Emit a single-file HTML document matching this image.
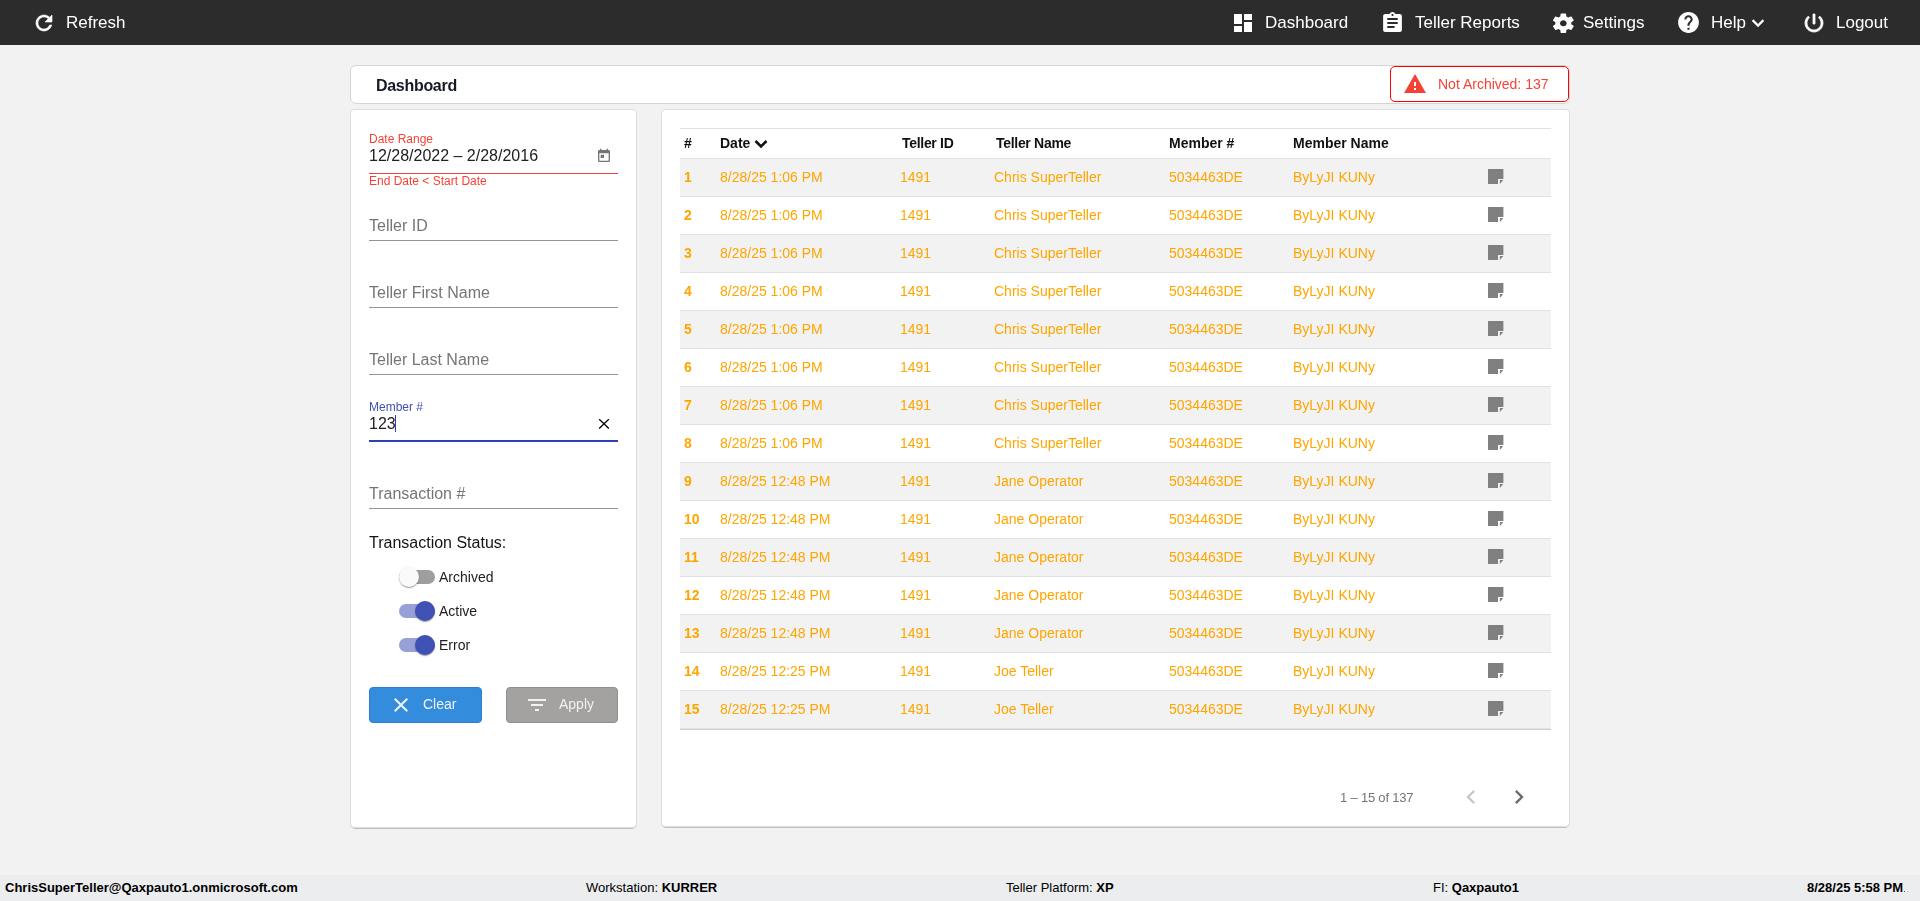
<!DOCTYPE html>
<html>
<head>
<meta charset="utf-8">
<style>
html,body{margin:0;padding:0;width:1920px;height:901px;overflow:hidden;background:#f2f2f2;font-family:"Liberation Sans",sans-serif;}
.a{position:absolute;}
.t{position:absolute;white-space:nowrap;line-height:1;}
svg{position:absolute;display:block;}
#nav{left:0;top:0;width:1920px;height:45px;background:#2c2c2c;}
.nt{font-size:17px;color:#fff;top:14px;}
.card{position:absolute;background:#fff;border-radius:4px;box-shadow:0 0 0 1px rgba(0,0,0,.085);}
.ph{font-size:16px;color:#757575;}
.ul{position:absolute;left:369px;width:249px;height:1px;background:#949494;}
.row{position:absolute;left:680px;width:871px;height:37px;border-bottom:1px solid #dee2e6;}
.odd{background:#f2f2f2;}
.c{position:absolute;white-space:nowrap;line-height:1;font-size:14px;color:#ffa500;}
.h{position:absolute;white-space:nowrap;line-height:1;font-size:14px;color:#111;font-weight:bold;top:136px;}
.ft{position:absolute;white-space:nowrap;line-height:1;font-size:13px;color:#000;top:881px;}
</style>
</head>
<body>
<div id="main" style="position:absolute;left:0;top:0;width:1920px;height:901px;will-change:transform">
<!-- NAV -->
<div id="nav" class="a">
  <svg style="left:32px;top:11px" width="24" height="24" viewBox="0 0 24 24"><path fill="#fff" stroke="#fff" stroke-width="0.6" d="M17.65 6.35C16.2 4.9 14.21 4 12 4c-4.42 0-7.99 3.58-7.99 8s3.57 8 7.99 8c3.73 0 6.84-2.55 7.73-6h-2.08c-.82 2.33-3.04 4-5.65 4-3.31 0-6-2.69-6-6s2.69-6 6-6c1.66 0 3.14.69 4.22 1.78L13 11h7V4l-2.35 2.35z"/></svg>
  <div class="t nt" style="left:66px">Refresh</div>

  <svg style="left:1231px;top:11px" width="24" height="24" viewBox="0 0 24 24"><path fill="#fff" d="M3 13h8V3H3v10zm0 8h8v-6H3v6zm10 0h8V11h-8v10zm0-18v6h8V3h-8z"/></svg>
  <div class="t nt" style="left:1265px">Dashboard</div>

  <svg style="left:1380.3px;top:11px" width="25" height="24" viewBox="0 0 24 24" preserveAspectRatio="none"><path fill="#fff" d="M19 3h-4.18C14.4 1.84 13.3 1 12 1c-1.3 0-2.4.84-2.82 2H5c-1.1 0-2 .9-2 2v14c0 1.1.9 2 2 2h14c1.1 0 2-.9 2-2V5c0-1.1-.9-2-2-2zm-7 0c.55 0 1 .45 1 1s-.45 1-1 1-1-.45-1-1 .45-1 1-1zm2 14H7v-2h7v2zm3-4H7v-2h10v2zm0-4H7V7h10v2z"/></svg>
  <div class="t nt" style="left:1415px">Teller Reports</div>

  <svg style="left:1550.2px;top:10.7px" width="26.7" height="24.5" viewBox="0 0 24 24" preserveAspectRatio="none"><path fill="#fff" d="M19.14 12.94c.04-.3.06-.61.06-.94 0-.32-.02-.64-.07-.94l2.03-1.58c.18-.14.23-.41.12-.61l-1.92-3.32c-.12-.22-.37-.29-.59-.22l-2.39.96c-.5-.38-1.03-.7-1.62-.94l-.36-2.54c-.04-.24-.24-.41-.48-.41h-3.84c-.24 0-.43.17-.47.41l-.36 2.54c-.59.24-1.13.57-1.62.94l-2.39-.96c-.22-.08-.47 0-.59.22L2.74 8.87c-.12.21-.08.47.12.61l2.03 1.58c-.05.3-.09.63-.09.94s.02.64.07.94l-2.03 1.58c-.18.14-.23.41-.12.61l1.92 3.32c.12.22.37.29.59.22l2.39-.96c.5.38 1.03.7 1.62.94l.36 2.54c.05.24.24.41.48.41h3.84c.24 0 .44-.17.47-.41l.36-2.54c.59-.24 1.13-.56 1.62-.94l2.39.96c.22.08.47 0 .59-.22l1.92-3.32c.12-.22.07-.47-.12-.61l-2.01-1.58zM12 15c-1.65 0-3-1.35-3-3s1.35-3 3-3 3 1.35 3 3-1.35 3-3 3z"/></svg>
  <div class="t nt" style="left:1583px">Settings</div>

  <svg style="left:1676.4px;top:10.4px" width="25" height="25" viewBox="0 0 24 24"><path fill="#fff" d="M12 2C6.48 2 2 6.48 2 12s4.48 10 10 10 10-4.48 10-10S17.52 2 12 2zm1 17h-2v-2h2v2zm2.07-7.75l-.9.92C13.45 12.9 13 13.5 13 15h-2v-.5c0-1.1.45-2.1 1.17-2.83l1.24-1.26c.37-.36.59-.86.59-1.41 0-1.1-.9-2-2-2s-2 .9-2 2H8c0-2.21 1.79-4 4-4s4 1.79 4 4c0 .88-.36 1.68-.93 2.25z"/></svg>
  <div class="t nt" style="left:1711px">Help</div>
  <svg style="left:1746px;top:11px" width="24" height="24" viewBox="0 0 24 24"><path fill="#fff" stroke="#fff" stroke-width="0.4" d="M16.59 8.59L12 13.17 7.41 8.59 6 10l6 6 6-6z"/></svg>

  <svg style="left:1802px;top:11px" width="24" height="24" viewBox="0 0 24 24"><path fill="#fff" stroke="#fff" stroke-width="0.8" d="M13 3h-2v10h2V3zm4.83 2.17l-1.42 1.42C17.99 7.86 19 9.81 19 12c0 3.87-3.13 7-7 7s-7-3.13-7-7c0-2.19 1.01-4.14 2.58-5.42L6.17 5.17C4.23 6.82 3 9.26 3 12c0 4.97 4.03 9 9 9s9-4.03 9-9c0-2.74-1.23-5.18-3.17-6.83z"/></svg>
  <div class="t nt" style="left:1836px">Logout</div>
</div>

<!-- HEADER CARD -->
<div class="a" style="left:350px;top:65px;width:1218px;height:37px;border:1px solid #d4d4d4;border-radius:6px;background:#fff"></div>
<div class="t" style="left:376px;top:78px;font-size:16px;font-weight:bold;color:#151a24;letter-spacing:-0.3px">Dashboard</div>
<div class="a" style="left:1390px;top:66px;width:177px;height:34px;border:1px solid #ff0000;border-radius:5px;background:#fff;"></div>
<svg style="left:1403px;top:72px" width="24" height="24" viewBox="0 0 24 24"><path fill="#f44336" d="M1 21h22L12 2 1 21zm12-3h-2v-2h2v2zm0-4h-2v-4h2v4z"/></svg>
<div class="t" style="left:1438px;top:77px;font-size:14px;color:#f44336">Not Archived: 137</div>

<!-- LEFT PANEL -->
<div class="a" style="left:350px;top:109px;width:287px;height:720px;border-radius:5px;background:linear-gradient(to bottom,rgba(0,0,0,.085) 719px,rgba(0,0,0,.2) 719px)"></div>
<div class="a" style="left:351px;top:110px;width:285px;height:717px;border-radius:4px;background:#fff"></div>
<div class="t" style="left:369px;top:133px;font-size:12px;color:#f44336">Date Range</div>
<div class="t" style="left:369px;top:148px;font-size:16px;color:#212121">12/28/2022 – 2/28/2016</div>
<svg style="left:596px;top:148px" width="16" height="16" viewBox="0 0 24 24"><path fill="#757575" d="M19 3h-1V1h-2v2H8V1H6v2H5c-1.11 0-1.99.9-1.99 2L3 19c0 1.1.89 2 2 2h14c1.1 0 2-.9 2-2V5c0-1.1-.9-2-2-2zm0 16H5V8h14v11zM7 10h5v5H7z"/></svg>
<div class="ul" style="top:173px;background:#f44336"></div>
<div class="t" style="left:369px;top:175px;font-size:12px;color:#f44336">End Date &lt; Start Date</div>

<div class="t ph" style="left:369px;top:218px">Teller ID</div>
<div class="ul" style="top:240px"></div>
<div class="t ph" style="left:369px;top:285px">Teller First Name</div>
<div class="ul" style="top:307px"></div>
<div class="t ph" style="left:369px;top:352px">Teller Last Name</div>
<div class="ul" style="top:374px"></div>

<div class="t" style="left:369px;top:401px;font-size:12px;color:#3f51b5">Member #</div>
<div class="t" style="left:369px;top:416px;font-size:16px;color:#212121">123</div>
<div class="a" style="left:395px;top:415px;width:1px;height:17px;background:#3040b0"></div>
<svg style="left:596px;top:416px" width="16" height="16" viewBox="0 0 16 16"><path d="M3.2 3.2L12.8 12.4M12.8 3.2L3.2 12.4" stroke="#000" stroke-width="1.35" fill="none"/></svg>
<div class="ul" style="top:440px;height:2px;background:#3040b0"></div>

<div class="t ph" style="left:369px;top:486px">Transaction #</div>
<div class="ul" style="top:508px"></div>

<div class="t" style="left:369px;top:535px;font-size:16px;color:#141414">Transaction Status:</div>

<!-- toggles -->
<div class="a" style="left:399px;top:570px;width:36px;height:14px;border-radius:7px;background:#9e9e9e"></div>
<div class="a" style="left:399px;top:567px;width:20px;height:20px;border-radius:50%;background:#fafafa;box-shadow:0 2px 1px -1px rgba(0,0,0,.2),0 1px 1px 0 rgba(0,0,0,.14),0 1px 3px 0 rgba(0,0,0,.12)"></div>
<div class="t" style="left:439px;top:570px;font-size:14px;color:#212121">Archived</div>

<div class="a" style="left:399px;top:604px;width:36px;height:14px;border-radius:7px;background:#97a1d7"></div>
<div class="a" style="left:415px;top:601px;width:20px;height:20px;border-radius:50%;background:#3f51b5;box-shadow:0 2px 1px -1px rgba(0,0,0,.2),0 1px 1px 0 rgba(0,0,0,.14),0 1px 3px 0 rgba(0,0,0,.12)"></div>
<div class="t" style="left:439px;top:604px;font-size:14px;color:#212121">Active</div>

<div class="a" style="left:399px;top:638px;width:36px;height:14px;border-radius:7px;background:#97a1d7"></div>
<div class="a" style="left:415px;top:635px;width:20px;height:20px;border-radius:50%;background:#3f51b5;box-shadow:0 2px 1px -1px rgba(0,0,0,.2),0 1px 1px 0 rgba(0,0,0,.14),0 1px 3px 0 rgba(0,0,0,.12)"></div>
<div class="t" style="left:439px;top:638px;font-size:14px;color:#212121">Error</div>

<!-- buttons -->
<div class="a" style="left:369px;top:687px;width:111px;height:34px;border:1px solid #2a7fcf;border-radius:4px;background:#338ddc"></div>
<svg style="left:389px;top:693px" width="24" height="24" viewBox="0 0 24 24"><path fill="#f2f2f2" d="M19 6.41L17.59 5 12 10.59 6.41 5 5 6.41 10.59 12 5 17.59 6.41 19 12 13.41 17.59 19 19 17.59 13.41 12z"/></svg>
<div class="t" style="left:423px;top:697px;font-size:14px;color:#f2f2f2">Clear</div>

<div class="a" style="left:506px;top:687px;width:110px;height:34px;border:1px solid #8f8f8f;border-radius:4px;background:#a3a2a0"></div>
<svg style="left:525px;top:693px" width="24" height="24" viewBox="0 0 24 24"><path fill="#f2f2f2" d="M10 18h4v-2h-4v2zM3 6v2h18V6H3zm3 7h12v-2H6v2z"/></svg>
<div class="t" style="left:559px;top:697px;font-size:14px;color:#f2f2f2">Apply</div>

<!-- RIGHT PANEL -->
<div class="a" style="left:661px;top:109px;width:909px;height:719px;border-radius:5px;background:linear-gradient(to bottom,rgba(0,0,0,.085) 718px,rgba(0,0,0,.2) 718px)"></div>
<div class="a" style="left:662px;top:110px;width:907px;height:716px;border-radius:4px;background:#fff"></div>
<div class="a" style="left:680px;top:128px;width:871px;height:1px;background:#dee2e6"></div>
<div class="a" style="left:680px;top:158px;width:871px;height:1px;background:#dee2e6"></div>
<div class="h" style="left:684px">#</div>
<div class="h" style="left:720px">Date</div>
<svg style="left:754px;top:139px" width="14" height="10" viewBox="0 0 14 10"><polyline points="1.5,2 7,7.5 12.5,2" fill="none" stroke="#111" stroke-width="2.6"/></svg>
<div class="h" style="left:902px;letter-spacing:-0.3px">Teller ID</div>
<div class="h" style="left:996px;letter-spacing:-0.3px">Teller Name</div>
<div class="h" style="left:1169px">Member #</div>
<div class="h" style="left:1293px">Member Name</div>

<div id="rows">
<div class="row odd" style="top:159px"><div class="c" style="left:4px;top:11px;font-weight:bold">1</div><div class="c" style="left:40px;top:11px">8/28/25 1:06 PM</div><div class="c" style="left:220px;top:11px">1491</div><div class="c" style="left:314px;top:11px">Chris SuperTeller</div><div class="c" style="left:489px;top:11px">5034463DE</div><div class="c" style="left:613px;top:11px">ByLyJI KUNy</div><svg style="left:808px;top:10px" width="16" height="16" viewBox="0 0 16 16"><path fill="#808080" d="M0 0H15.4V10H10V15H0Z"/><path fill="#808080" d="M11.9 11.1H15.3L11.9 15Z"/></svg></div>
<div class="row" style="top:197px"><div class="c" style="left:4px;top:11px;font-weight:bold">2</div><div class="c" style="left:40px;top:11px">8/28/25 1:06 PM</div><div class="c" style="left:220px;top:11px">1491</div><div class="c" style="left:314px;top:11px">Chris SuperTeller</div><div class="c" style="left:489px;top:11px">5034463DE</div><div class="c" style="left:613px;top:11px">ByLyJI KUNy</div><svg style="left:808px;top:10px" width="16" height="16" viewBox="0 0 16 16"><path fill="#808080" d="M0 0H15.4V10H10V15H0Z"/><path fill="#808080" d="M11.9 11.1H15.3L11.9 15Z"/></svg></div>
<div class="row odd" style="top:235px"><div class="c" style="left:4px;top:11px;font-weight:bold">3</div><div class="c" style="left:40px;top:11px">8/28/25 1:06 PM</div><div class="c" style="left:220px;top:11px">1491</div><div class="c" style="left:314px;top:11px">Chris SuperTeller</div><div class="c" style="left:489px;top:11px">5034463DE</div><div class="c" style="left:613px;top:11px">ByLyJI KUNy</div><svg style="left:808px;top:10px" width="16" height="16" viewBox="0 0 16 16"><path fill="#808080" d="M0 0H15.4V10H10V15H0Z"/><path fill="#808080" d="M11.9 11.1H15.3L11.9 15Z"/></svg></div>
<div class="row" style="top:273px"><div class="c" style="left:4px;top:11px;font-weight:bold">4</div><div class="c" style="left:40px;top:11px">8/28/25 1:06 PM</div><div class="c" style="left:220px;top:11px">1491</div><div class="c" style="left:314px;top:11px">Chris SuperTeller</div><div class="c" style="left:489px;top:11px">5034463DE</div><div class="c" style="left:613px;top:11px">ByLyJI KUNy</div><svg style="left:808px;top:10px" width="16" height="16" viewBox="0 0 16 16"><path fill="#808080" d="M0 0H15.4V10H10V15H0Z"/><path fill="#808080" d="M11.9 11.1H15.3L11.9 15Z"/></svg></div>
<div class="row odd" style="top:311px"><div class="c" style="left:4px;top:11px;font-weight:bold">5</div><div class="c" style="left:40px;top:11px">8/28/25 1:06 PM</div><div class="c" style="left:220px;top:11px">1491</div><div class="c" style="left:314px;top:11px">Chris SuperTeller</div><div class="c" style="left:489px;top:11px">5034463DE</div><div class="c" style="left:613px;top:11px">ByLyJI KUNy</div><svg style="left:808px;top:10px" width="16" height="16" viewBox="0 0 16 16"><path fill="#808080" d="M0 0H15.4V10H10V15H0Z"/><path fill="#808080" d="M11.9 11.1H15.3L11.9 15Z"/></svg></div>
<div class="row" style="top:349px"><div class="c" style="left:4px;top:11px;font-weight:bold">6</div><div class="c" style="left:40px;top:11px">8/28/25 1:06 PM</div><div class="c" style="left:220px;top:11px">1491</div><div class="c" style="left:314px;top:11px">Chris SuperTeller</div><div class="c" style="left:489px;top:11px">5034463DE</div><div class="c" style="left:613px;top:11px">ByLyJI KUNy</div><svg style="left:808px;top:10px" width="16" height="16" viewBox="0 0 16 16"><path fill="#808080" d="M0 0H15.4V10H10V15H0Z"/><path fill="#808080" d="M11.9 11.1H15.3L11.9 15Z"/></svg></div>
<div class="row odd" style="top:387px"><div class="c" style="left:4px;top:11px;font-weight:bold">7</div><div class="c" style="left:40px;top:11px">8/28/25 1:06 PM</div><div class="c" style="left:220px;top:11px">1491</div><div class="c" style="left:314px;top:11px">Chris SuperTeller</div><div class="c" style="left:489px;top:11px">5034463DE</div><div class="c" style="left:613px;top:11px">ByLyJI KUNy</div><svg style="left:808px;top:10px" width="16" height="16" viewBox="0 0 16 16"><path fill="#808080" d="M0 0H15.4V10H10V15H0Z"/><path fill="#808080" d="M11.9 11.1H15.3L11.9 15Z"/></svg></div>
<div class="row" style="top:425px"><div class="c" style="left:4px;top:11px;font-weight:bold">8</div><div class="c" style="left:40px;top:11px">8/28/25 1:06 PM</div><div class="c" style="left:220px;top:11px">1491</div><div class="c" style="left:314px;top:11px">Chris SuperTeller</div><div class="c" style="left:489px;top:11px">5034463DE</div><div class="c" style="left:613px;top:11px">ByLyJI KUNy</div><svg style="left:808px;top:10px" width="16" height="16" viewBox="0 0 16 16"><path fill="#808080" d="M0 0H15.4V10H10V15H0Z"/><path fill="#808080" d="M11.9 11.1H15.3L11.9 15Z"/></svg></div>
<div class="row odd" style="top:463px"><div class="c" style="left:4px;top:11px;font-weight:bold">9</div><div class="c" style="left:40px;top:11px">8/28/25 12:48 PM</div><div class="c" style="left:220px;top:11px">1491</div><div class="c" style="left:314px;top:11px">Jane Operator</div><div class="c" style="left:489px;top:11px">5034463DE</div><div class="c" style="left:613px;top:11px">ByLyJI KUNy</div><svg style="left:808px;top:10px" width="16" height="16" viewBox="0 0 16 16"><path fill="#808080" d="M0 0H15.4V10H10V15H0Z"/><path fill="#808080" d="M11.9 11.1H15.3L11.9 15Z"/></svg></div>
<div class="row" style="top:501px"><div class="c" style="left:4px;top:11px;font-weight:bold">10</div><div class="c" style="left:40px;top:11px">8/28/25 12:48 PM</div><div class="c" style="left:220px;top:11px">1491</div><div class="c" style="left:314px;top:11px">Jane Operator</div><div class="c" style="left:489px;top:11px">5034463DE</div><div class="c" style="left:613px;top:11px">ByLyJI KUNy</div><svg style="left:808px;top:10px" width="16" height="16" viewBox="0 0 16 16"><path fill="#808080" d="M0 0H15.4V10H10V15H0Z"/><path fill="#808080" d="M11.9 11.1H15.3L11.9 15Z"/></svg></div>
<div class="row odd" style="top:539px"><div class="c" style="left:4px;top:11px;font-weight:bold">11</div><div class="c" style="left:40px;top:11px">8/28/25 12:48 PM</div><div class="c" style="left:220px;top:11px">1491</div><div class="c" style="left:314px;top:11px">Jane Operator</div><div class="c" style="left:489px;top:11px">5034463DE</div><div class="c" style="left:613px;top:11px">ByLyJI KUNy</div><svg style="left:808px;top:10px" width="16" height="16" viewBox="0 0 16 16"><path fill="#808080" d="M0 0H15.4V10H10V15H0Z"/><path fill="#808080" d="M11.9 11.1H15.3L11.9 15Z"/></svg></div>
<div class="row" style="top:577px"><div class="c" style="left:4px;top:11px;font-weight:bold">12</div><div class="c" style="left:40px;top:11px">8/28/25 12:48 PM</div><div class="c" style="left:220px;top:11px">1491</div><div class="c" style="left:314px;top:11px">Jane Operator</div><div class="c" style="left:489px;top:11px">5034463DE</div><div class="c" style="left:613px;top:11px">ByLyJI KUNy</div><svg style="left:808px;top:10px" width="16" height="16" viewBox="0 0 16 16"><path fill="#808080" d="M0 0H15.4V10H10V15H0Z"/><path fill="#808080" d="M11.9 11.1H15.3L11.9 15Z"/></svg></div>
<div class="row odd" style="top:615px"><div class="c" style="left:4px;top:11px;font-weight:bold">13</div><div class="c" style="left:40px;top:11px">8/28/25 12:48 PM</div><div class="c" style="left:220px;top:11px">1491</div><div class="c" style="left:314px;top:11px">Jane Operator</div><div class="c" style="left:489px;top:11px">5034463DE</div><div class="c" style="left:613px;top:11px">ByLyJI KUNy</div><svg style="left:808px;top:10px" width="16" height="16" viewBox="0 0 16 16"><path fill="#808080" d="M0 0H15.4V10H10V15H0Z"/><path fill="#808080" d="M11.9 11.1H15.3L11.9 15Z"/></svg></div>
<div class="row" style="top:653px"><div class="c" style="left:4px;top:11px;font-weight:bold">14</div><div class="c" style="left:40px;top:11px">8/28/25 12:25 PM</div><div class="c" style="left:220px;top:11px">1491</div><div class="c" style="left:314px;top:11px">Joe Teller</div><div class="c" style="left:489px;top:11px">5034463DE</div><div class="c" style="left:613px;top:11px">ByLyJI KUNy</div><svg style="left:808px;top:10px" width="16" height="16" viewBox="0 0 16 16"><path fill="#808080" d="M0 0H15.4V10H10V15H0Z"/><path fill="#808080" d="M11.9 11.1H15.3L11.9 15Z"/></svg></div>
<div class="row odd" style="top:691px"><div class="c" style="left:4px;top:11px;font-weight:bold">15</div><div class="c" style="left:40px;top:11px">8/28/25 12:25 PM</div><div class="c" style="left:220px;top:11px">1491</div><div class="c" style="left:314px;top:11px">Joe Teller</div><div class="c" style="left:489px;top:11px">5034463DE</div><div class="c" style="left:613px;top:11px">ByLyJI KUNy</div><svg style="left:808px;top:10px" width="16" height="16" viewBox="0 0 16 16"><path fill="#808080" d="M0 0H15.4V10H10V15H0Z"/><path fill="#808080" d="M11.9 11.1H15.3L11.9 15Z"/></svg></div>
</div>

<!-- pagination -->
<div class="t" style="left:1340px;top:791px;font-size:13px;color:#757575;letter-spacing:-0.2px">1 – 15 of 137</div>
<div class="a" style="left:680px;top:729px;width:871px;height:1px;background:#cfcfcf"></div>
<svg style="left:1457px;top:783px" width="28" height="28" viewBox="0 0 24 24"><path fill="#c8c8c8" d="M15.41 7.41L14 6l-6 6 6 6 1.41-1.41L10.83 12z"/></svg>
<svg style="left:1505px;top:783px" width="28" height="28" viewBox="0 0 24 24"><path fill="#6b6b6b" d="M10 6L8.59 7.41 13.17 12l-4.58 4.59L10 18l6-6z"/></svg>

</div>
<!-- FOOTER -->
<div class="a" style="left:0;top:875px;width:1920px;height:26px;background:#ecedef"></div>
<div class="ft" style="left:5px;font-weight:bold">ChrisSuperTeller@Qaxpauto1.onmicrosoft.com</div>
<div class="ft" style="left:586px">Workstation: <b>KURRER</b></div>
<div class="ft" style="left:1006px">Teller Platform: <b>XP</b></div>
<div class="ft" style="left:1433px">FI: <b>Qaxpauto1</b></div>
<div class="ft" style="left:1807px;font-weight:bold">8/28/25 5:58 PM</div>
<div class="a" style="left:1904px;top:891px;width:1px;height:1px;background:#555"></div>
<div class="a" style="left:1907px;top:891px;width:1px;height:1px;background:#bbb"></div>
</body>
</html>
